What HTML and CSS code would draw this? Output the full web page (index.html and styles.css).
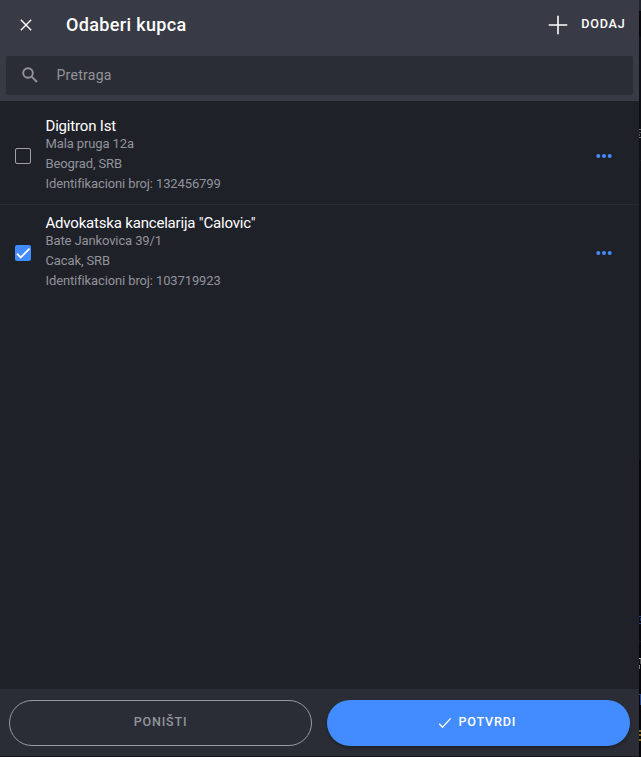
FILE: index.html
```
<!DOCTYPE html>
<html lang="sr-Latn">
<head>
<meta charset="utf-8">
<title>Odaberi kupca</title>
<link rel="stylesheet" href="styles.css">
</head>
<body>
<div class="page">
  <main class="modal">
    <header class="header">
      <div class="toolbar">
        <svg class="close" viewBox="0 0 14 14"><path d="M1.8 1.8 12.2 12.2M12.2 1.8 1.8 12.2"/></svg>
        <h1 class="title">Odaberi kupca</h1>
        <button class="add"><svg class="plus" viewBox="0 0 20 20"><path d="M10 1.3v17.4M1.3 10h17.4"/></svg><span>DODAJ</span></button>
      </div>
      <label class="search">
        <svg class="lens" viewBox="0 0 16 16"><circle cx="6" cy="6" r="4.8"/><path d="M9.6 9.6 15 15"/></svg>
        <span>Pretraga</span>
      </label>
    </header>
    <section class="list">
      <article class="item">
        <span class="box"></span>
        <div class="info"><h2>Digitron Ist</h2><p>Mala pruga 12a</p><p>Beograd, SRB</p><p>Identifikacioni broj: 132456799</p></div>
        <svg class="dots" viewBox="0 0 16 6"><circle cx="2.3" cy="3" r="2"/><circle cx="8" cy="3" r="2"/><circle cx="13.7" cy="3" r="2"/></svg>
      </article>
      <article class="item last">
        <span class="box checked"><svg viewBox="0 0 16 16"><path d="M2 8.7 5.7 12.5 14.5 3.7"/></svg></span>
        <div class="info"><h2>Advokatska kancelarija "Calovic"</h2><p>Bate Jankovica 39/1</p><p>Cacak, SRB</p><p>Identifikacioni broj: 103719923</p></div>
        <svg class="dots" viewBox="0 0 16 6"><circle cx="2.3" cy="3" r="2"/><circle cx="8" cy="3" r="2"/><circle cx="13.7" cy="3" r="2"/></svg>
      </article>
    </section>
    <footer class="footer">
      <button class="btn outline">PONIŠTI</button>
      <button class="btn solid"><svg class="tick" viewBox="0 0 14 12"><path d="M1.2 6.7 4.6 10.2 12.6 1.4"/></svg><span>POTVRDI</span></button>
    </footer>
  </main>
  <svg class="backdrop" viewBox="0 0 2 757">
    <rect width="2" height="11" fill="#22242b"/>
    <rect y="11" width="2" height="26" fill="#08080b"/>
    <rect y="37" width="2" height="103" fill="#0d0f14"/>
    <rect y="129" width="2" height="1" fill="#777"/><rect y="132" width="2" height="1" fill="#555"/><rect y="134" width="1" height="2" fill="#555"/><rect y="137" width="2" height="1" fill="#777"/>
    <rect y="140" width="2" height="320" fill="#0f1116"/>
    <rect y="160" width="2" height="1" fill="#191b21"/>
    <rect y="616" width="2" height="1" fill="#23448a"/><rect x="1" y="618" width="1" height="3" fill="#1b3265"/><rect y="623" width="2" height="1" fill="#23448a"/>
    <rect y="641" width="2" height="1" fill="#15171c"/>
    <rect y="658" width="2" height="1" fill="#aaa"/><rect x="1" y="659" width="1" height="5" fill="#555"/><rect y="665" width="1" height="4" fill="#777"/>
    <rect y="694" width="2" height="1" fill="#23448a"/><rect x="1" y="695" width="1" height="10" fill="#23448a"/>
    <rect y="730" width="2" height="2" fill="#84661c"/><rect y="734" width="2" height="2" fill="#84661c"/><rect y="739" width="2" height="2" fill="#84661c"/>
  </svg>
</div>
</body>
</html>
```
FILE: styles.css
```
* { box-sizing: border-box; }
body { margin: 0; background: #060609; font-family: Roboto, "Liberation Sans", sans-serif; color: #fff; }
h1, h2, p { margin: 0; font-weight: 400; }
button { border: 0; background: none; color: inherit; font: 500 12.6px/16px Roboto, sans-serif; padding: 0; }
svg { display: block; flex: none; fill: none; stroke: currentColor; }
.page { display: flex; width: 641px; height: 757px; overflow: hidden; }
.modal { display: flex; flex-direction: column; width: 639px; height: 757px; background: #1f2129; border-bottom: 1px solid #17181d; }
.backdrop { width: 2px; height: 757px; stroke: none; }
.header { height: 101px; background: #383b45; }
.toolbar { display: flex; align-items: center; height: 56px; padding: 0 13.5px 7px 19px; }
.close { width: 14px; height: 14px; stroke-width: 1.4; }
.title { margin-left: 33px; flex: 1; font-size: 18px; font-weight: 500; line-height: 24px; letter-spacing: .35px; }
.add { display: flex; align-items: center; gap: 13px; letter-spacing: .8px; }
.add span { position: relative; top: -1px; }
.plus { width: 20px; height: 20px; stroke-width: 1.6; stroke-linecap: round; }
.search { display: flex; align-items: center; height: 39px; margin: 0 6px; padding: 0 0 1px 16px; gap: 18.5px; border-radius: 2px; background: #2b2d36; color: #929399; font-size: 14px; letter-spacing: .28px; }
.lens { width: 16px; height: 16px; stroke-width: 1.9; }
.list { flex: 1; }
.item { display: flex; align-items: center; height: 104px; padding: 6px 27px 0 15px; border-bottom: 1px solid #292b33; }
.item.last { height: 90px; border: 0; }
.box { flex: none; width: 16px; height: 16px; border: 1px solid #a0a1a6; border-radius: 2px; }
.box.checked { background: #428cff; border: 0; }
.box svg { width: 16px; height: 16px; stroke-width: 1.8; }
.info { flex: 1; margin-left: 14.5px; }
.info h2 { margin-top: -1px; font-size: 15px; line-height: 18px; letter-spacing: -.19px; }
.info p { font-size: 13px; line-height: 20px; color: #929399; letter-spacing: -.12px; }
.info h2 + p { line-height: 18px; margin-bottom: 1px; }
.dots { width: 16px; height: 6px; color: #428cff; fill: currentColor; stroke: none; }
.footer { display: flex; gap: 15px; height: 67px; padding: 11px 9px 10px; background: #2b2d36; }
.btn { display: flex; align-items: center; justify-content: center; width: 303px; height: 46px; border-radius: 23px; letter-spacing: .8px; padding-bottom: 2px; }
.outline { border: 1px solid #989aa2; color: #92949b; }
.solid { background: #428cff; gap: 6px; padding-right: 2.5px; box-shadow: 0 2px 3px rgba(0,0,0,.3); }
.tick { width: 14px; height: 12px; margin-top: 2px; stroke-width: 1.3; }
```
